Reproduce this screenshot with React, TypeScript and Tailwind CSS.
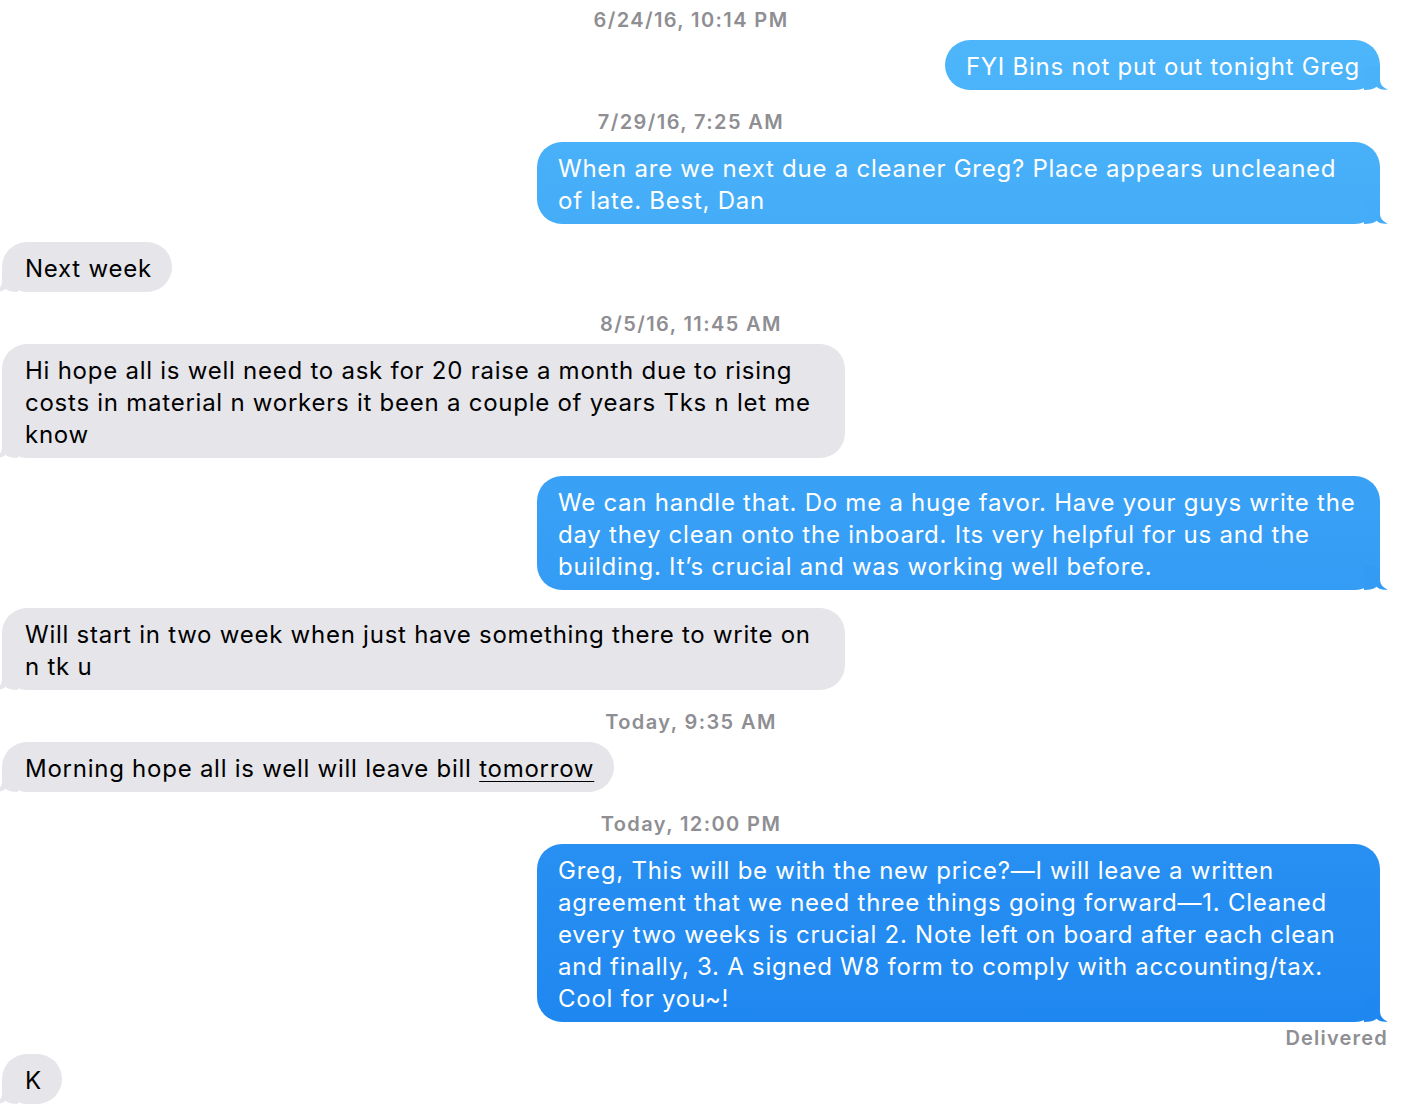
import React from "react";

type Msg =
  | { kind: "time"; text: string }
  | { kind: "out"; lines: React.ReactNode[]; tail: string }
  | { kind: "in"; lines: React.ReactNode[] }
  | { kind: "delivered" };

const messages: Msg[] = [
  { kind: "time", text: "6/24/16, 10:14 PM" },
  { kind: "out", lines: ["FYI Bins not put out tonight Greg"], tail: "#4ab2f9" },
  { kind: "time", text: "7/29/16, 7:25 AM" },
  {
    kind: "out",
    lines: ["When are we next due a cleaner Greg? Place appears uncleaned", "of late. Best, Dan"],
    tail: "#44acf8",
  },
  { kind: "in", lines: ["Next week"] },
  { kind: "time", text: "8/5/16, 11:45 AM" },
  {
    kind: "in",
    lines: [
      "Hi hope all is well need to ask for 20 raise a month due to rising",
      "costs in material n workers it been a couple of years Tks n let me",
      "know",
    ],
  },
  {
    kind: "out",
    lines: [
      "We can handle that. Do me a huge favor. Have your guys write the",
      "day they clean onto the inboard. Its very helpful for us and the",
      "building. It\u2019s crucial and was working well before.",
    ],
    tail: "#339bf4",
  },
  { kind: "in", lines: ["Will start in two week when just have something there to write on", "n tk u"] },
  { kind: "time", text: "Today, 9:35 AM" },
  {
    kind: "in",
    lines: [
      <>
        Morning hope all is well will leave bill{" "}
        <span className="underline decoration-1 underline-offset-[4px]">tomorrow</span>
      </>,
    ],
  },
  { kind: "time", text: "Today, 12:00 PM" },
  {
    kind: "out",
    lines: [
      "Greg, This will be with the new price?\u2014I will leave a written",
      "agreement that we need three things going forward\u20141. Cleaned",
      "every two weeks is crucial 2. Note left on board after each clean",
      "and finally, 3. A signed W8 form to comply with accounting/tax.",
      "Cool for you~!",
    ],
    tail: "#1f88f0",
  },
  { kind: "delivered" },
  { kind: "in", lines: ["K"] },
];

function Tail({ color, flip }: { color: string; flip?: boolean }) {
  return (
    <svg
      width="24"
      height="24"
      viewBox="0 0 24 24"
      className={flip ? "absolute -left-[8px] bottom-0 -scale-x-100" : "absolute -right-[8px] bottom-0"}
    >
      <path
        d="M0 0 L16 0 L16 13 C16 18.5 19 21.8 23.8 23.4 C19.5 24.3 15 23.2 12.5 20.8 C10 23 6 24 0 24 Z"
        fill={color}
      />
    </svg>
  );
}

function Lines({ lines }: { lines: React.ReactNode[] }) {
  return (
    <>
      {lines.map((l, i) => (
        <span key={i} className="block whitespace-nowrap">
          {l}
        </span>
      ))}
    </>
  );
}

export default function App() {
  return (
    <div className="w-[1408px] h-[1114px] overflow-hidden bg-white font-['Inter','Liberation_Sans',sans-serif]">
      <div className="w-[1388px] flex flex-col pb-[10px]">
        {messages.map((m, i) => {
          const prev = messages[i - 1];
          if (m.kind === "time") {
            return (
              <div
                key={i}
                className={`w-[1382px] h-[40px] flex items-center justify-center text-[20px] font-semibold tracking-[1.4px] text-[#8e8e93] ${
                  i === 0 ? "" : "mt-[12px]"
                }`}
              >
                {m.text}
              </div>
            );
          }
          if (m.kind === "delivered") {
            return (
              <div
                key={i}
                className="h-[32px] flex items-center justify-end text-[20px] font-semibold tracking-[1.2px] text-[#8e8e93]"
              >
                Delivered
              </div>
            );
          }
          const gap = !prev || prev.kind === "time" ? "" : prev.kind === "delivered" ? "mt-0" : "mt-[18px]";
          const width = m.lines.length > 1 ? "w-[843px]" : "max-w-[843px]";
          if (m.kind === "out") {
            return (
              <div key={i} className={`flex justify-end pr-[8px] ${gap}`}>
                <div
                  className={`relative ${width} rounded-[25px] bg-fixed bg-linear-to-b from-[#4fb7fa] to-[#1a83ef] pl-[21px] pr-[20px] pt-[11px] pb-[7px] text-[24px] leading-[32px] tracking-[0.75px] text-white`}
                >
                  <Lines lines={m.lines} />
                  <Tail color={m.tail} />
                </div>
              </div>
            );
          }
          return (
            <div key={i} className={`flex justify-start pl-[2px] ${gap}`}>
              <div
                className={`relative ${width} rounded-[25px] bg-[#e5e5ea] pl-[23px] pr-[20px] pt-[11px] pb-[7px] text-[24px] leading-[32px] tracking-[0.75px] text-black`}
              >
                <Lines lines={m.lines} />
                <Tail color="#e5e5ea" flip />
              </div>
            </div>
          );
        })}
      </div>
    </div>
  );
}
